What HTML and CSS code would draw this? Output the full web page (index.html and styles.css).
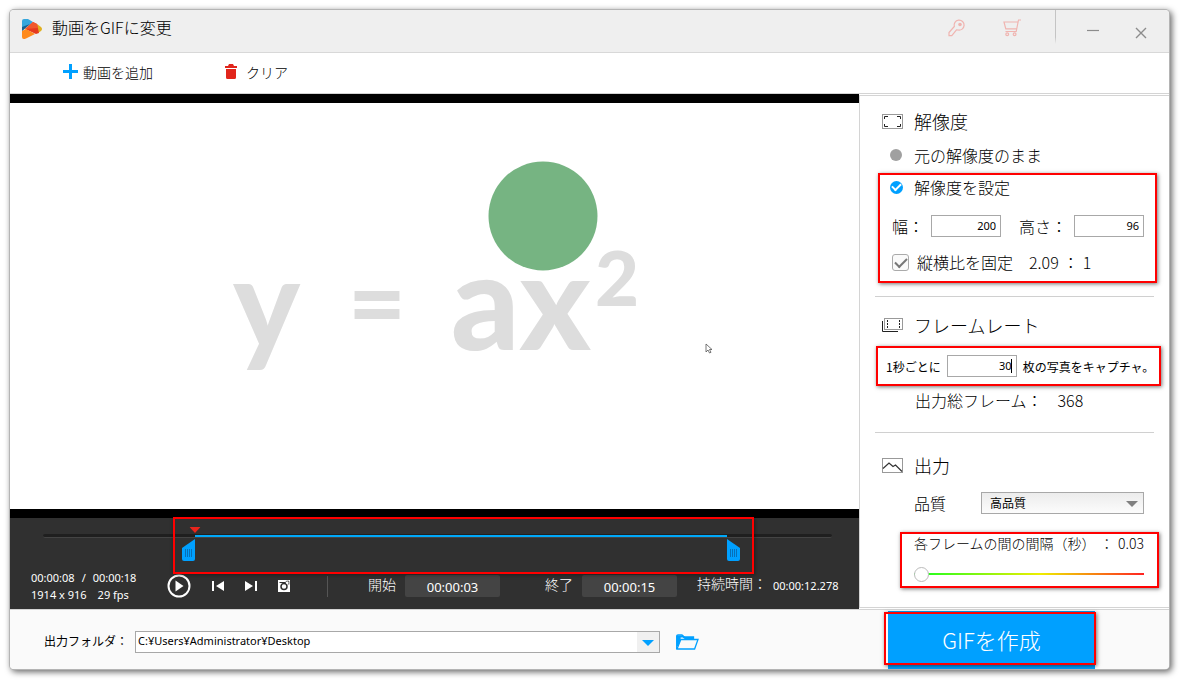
FILE: index.html
```html
<!DOCTYPE html>
<html lang="ja">
<head>
<meta charset="utf-8">
<title>動画をGIFに変更</title>
<link rel="stylesheet" href="styles.css">
</head>
<body>
<div class="window">
  <header class="titlebar">
    <svg class="logo" width="20" height="20" viewBox="0 0 20 20">
      <path d="M0 2Q0 0 2 0L6 0 11 3 0 12Z" fill="#35a6dc"/>
      <path d="M0 8L8 5 0 12Z" fill="#17608f"/>
      <path d="M15 5L19 8Q21 10 19 12L16 14Z" fill="#e0b020"/>
      <path d="M11 3L15 5 17 14 14 15 3 10Z" fill="#e63a1e"/>
      <path d="M11 3L15 5 16 9 3 10Z" fill="#f0582c"/>
      <path d="M0 12L4 10 13 15 4 19.500Q0 21 0 18Z" fill="#ff8a1c"/>
    </svg>
    <h1 class="title">動画をGIFに変更</h1>
    <button class="icon-button key" aria-label="登録">
      <svg width="18" height="18" viewBox="0 0 18 18" fill="none" stroke="#f0b4b0" stroke-width="1.2">
        <path d="M6.300 7.500A5 5 0 1 1 10 11L8.500 10.800 3.800 16.600H1V13.500Z"/>
        <circle cx="12" cy="5.500" r="1.200" fill="#f0b4b0"/>
      </svg>
    </button>
    <button class="icon-button cart" aria-label="購入">
      <svg width="18" height="18" viewBox="0 0 18 18" fill="none" stroke="#f0b4b0" stroke-width="1.2">
        <path d="M18 1H15.500L13.200 12.500H2.500M15 3H1L2.800 9.800H13.600"/>
        <circle cx="4.200" cy="15.200" r="1.400"/><circle cx="11.600" cy="15.200" r="1.400"/>
      </svg>
    </button>
    <span class="title-divider"></span>
    <button class="icon-button minimize" aria-label="最小化">
      <svg width="12" height="12" viewBox="0 0 12 12" stroke="#8c8c8c" stroke-width="1.2"><path d="M0 6.500H12"/></svg>
    </button>
    <button class="icon-button close" aria-label="閉じる">
      <svg width="12" height="12" viewBox="0 0 12 12" stroke="#8c8c8c" stroke-width="1.4"><path d="M1 1L11 11M11 1L1 11"/></svg>
    </button>
  </header>

  <nav class="toolbar">
    <button class="tool add">
      <svg width="15" height="15" viewBox="0 0 15 15" fill="#00a0ff"><path d="M6 0H9V6H15V9H9V15H6V9H0V6H6Z"/></svg>
      動画を追加
    </button>
    <button class="tool clear">
      <svg width="12" height="15" viewBox="0 0 12 15" fill="#e1251b"><path d="M0 2H3L4 0H8L9 2H12V4H0ZM1 5H11V13.500Q11 15 9.500 15H2.500Q1 15 1 13.500Z"/></svg>
      クリア
    </button>
  </nav>

  <main class="workspace">
    <section class="player">
      <div class="screen">
        <svg class="frame" viewBox="0 0 849 406" preserveAspectRatio="xMidYMid meet">
          <circle cx="533" cy="113" r="54.500" fill="#76b482"/>
          <g class="formula">
            <text x="223" y="246" font-size="126">y</text>
            <text x="338" y="235" font-size="100">=</text>
            <text x="441" y="247" font-size="134">ax</text>
            <text x="585" y="203" font-size="76">2</text>
          </g>
          <path d="M696 241V249L698 247 699.500 250 701 249.300 699.500 246.500H702Z" fill="#fff" stroke="#555" stroke-width=".8"/>
        </svg>
      </div>

      <div class="timeline">
        <div class="track">
          <span class="selection" style="left:19.300%;width:67.400%"></span>
          <svg class="playhead" style="left:19.300%" width="11" height="6" viewBox="0 0 11 6"><path d="M0 0H11L5.500 6Z" fill="#e8251c"/></svg>
          <svg class="handle start" style="left:19.300%" width="13" height="22" viewBox="0 0 13 22"><path d="M13 0V20Q13 22 11 22H2Q0 22 0 20V9Z" fill="#00a0ff"/><path d="M3.500 10V18M5.500 10V18M7.500 10V18M9.500 10V18" stroke="#0670b8"/></svg>
          <svg class="handle" style="left:86.700%" width="13" height="22" viewBox="0 0 13 22"><path d="M0 0V20Q0 22 2 22H11Q13 22 13 20V9Z" fill="#00a0ff"/><path d="M3.500 10V18M5.500 10V18M7.500 10V18M9.500 10V18" stroke="#0670b8"/></svg>
        </div>
        <span class="timeline-mark"></span>
      </div>

      <div class="controls">
        <div class="info">
          <div class="info-line"><span>00:00:08</span><span>/</span><span>00:00:18</span></div>
          <div class="info-line video"><span>1914 x 916</span><span>29 fps</span></div>
        </div>
        <div class="transport">
          <button class="icon-button" aria-label="再生">
            <svg width="24" height="24" viewBox="0 0 24 24"><circle cx="12" cy="12" r="10.500" fill="none" stroke="#fff" stroke-width="2"/><path d="M8.500 6.500L16.500 12 8.500 17.500Z" fill="#fff"/></svg>
          </button>
          <button class="icon-button" aria-label="前へ">
            <svg width="12" height="12" viewBox="0 0 12 12" fill="#fff"><path d="M0 1H2V11H0ZM12 1V11L4 6Z"/></svg>
          </button>
          <button class="icon-button" aria-label="次へ">
            <svg width="12" height="12" viewBox="0 0 12 12" fill="#fff"><path d="M10 1H12V11H10ZM0 1V11L8 6Z"/></svg>
          </button>
          <button class="icon-button" aria-label="スナップショット">
            <svg width="12" height="12" viewBox="0 0 12 12"><path d="M0 0H12V12H0Z" fill="#fff"/><path d="M1.500 2.500H7.500L8.500 1.200H10.800V4.500" fill="none" stroke="#303030" stroke-width="1"/><circle cx="6" cy="6.500" r="3" fill="#fff" stroke="#303030" stroke-width="1.500"/><circle cx="9.300" cy="2.800" r="1.200" fill="#fff"/></svg>
          </button>
        </div>
        <span class="control-divider"></span>
        <label class="time-field start-field">開始<input type="text" value="00:00:03"></label>
        <label class="time-field end-field">終了<input type="text" value="00:00:15"></label>
        <div class="duration">持続時間：<span>00:00:12.278</span></div>
      </div>
    </section>

    <aside class="settings">
      <section class="group">
        <h2 class="heading">
          <svg width="21" height="15" viewBox="0 0 21 15" fill="none"><rect x=".5" y=".5" width="20" height="14" stroke="#999"/><path d="M2.500 5V2.500H6M15 2.500H18.500V5M18.500 10V12.500H15M6 12.500H2.500V10" stroke="#222"/></svg>
          解像度
        </h2>
        <label class="option"><input class="radio" type="radio" name="size">元の解像度のまま</label>
        <div class="marked size-box">
          <label class="option"><input class="radio" type="radio" name="size" checked>解像度を設定</label>
          <div class="size-row">
            <label>幅：<input class="number" type="text" value="200"></label>
            <label class="height-label">高さ：<input class="number" type="text" value="96"></label>
          </div>
          <div class="ratio-row">
            <label><input class="check" type="checkbox" checked>縦横比を固定</label>
            <span class="ratio"><span>2.09</span><span>：</span><span>1</span></span>
          </div>
        </div>
      </section>

      <section class="group">
        <h2 class="heading">
          <svg width="21" height="15" viewBox="0 0 21 15" fill="none"><rect x="2.500" y=".5" width="18" height="11" stroke="#999"/><path d="M.5 3V13.500H16" stroke="#222"/><path d="M5.500 2V11M17.500 2V11" stroke="#222" stroke-dasharray="2 1"/></svg>
          フレームレート
        </h2>
        <label class="marked rate-box">1秒ごとに<input class="number" type="text" value="30"><span>枚の写真をキャプチャ。</span><i class="caret"></i></label>
        <div class="total">出力総フレーム：<span>368</span></div>
      </section>

      <section class="group">
        <h2 class="heading">
          <svg width="21" height="15" viewBox="0 0 21 15" fill="none"><rect x=".5" y=".5" width="20" height="14" stroke="#999"/><path d="M1 10.500L7 5 11 8.500 13.500 7 20 13.500" stroke="#333" stroke-width="1.200"/></svg>
          出力
        </h2>
        <label class="quality">品質
          <span class="select-wrap"><select><option>高品質</option></select></span>
        </label>
        <label class="marked interval-box">
          <span class="interval-text"><span>各フレームの間の間隔（秒）</span><span>：</span><span>0.03</span></span>
          <input class="slider" type="range" min="0" max="100" value="0">
        </label>
      </section>
    </aside>
  </main>

  <footer class="footer">
    <div class="folder">
      <label for="folder">出力フォルダ：</label>
      <span class="select-wrap path-wrap"><select id="folder"><option>C:¥Users¥Administrator¥Desktop</option></select></span>
      <button class="icon-button" aria-label="フォルダを開く">
        <svg width="23" height="16" viewBox="0 0 23 16" fill="none" stroke="#00a0ff" stroke-width="1.300"><path d="M.7 15V2Q.7 1 2 1H6L8 3H17.500V5"/><path d="M.7 2.500H7L9 4H17" stroke-width="2"/><path d="M1 15L4.800 5.500H22L18.600 15Z"/><path d="M1.500 3V12L4 5.500V3Z" fill="#00a0ff"/></svg>
      </button>
    </div>
    <button class="create">GIFを作成</button>
  </footer>
</div>
</body>
</html>
```
FILE: styles.css
```css
* { box-sizing: border-box; }

body {
  margin: 0;
  padding: 10px 11px 11px 10px;
  background: #fff;
  color: #000;
  font-family: "Noto Sans CJK JP", sans-serif;
  font-size: 16px;
  font-weight: 300;
}

button, input, select { font: inherit; color: inherit; }

button {
  padding: 0;
  border: 0;
  background: none;
}

svg { display: block; flex: none; }

.window {
  display: flex;
  flex-direction: column;
  min-height: calc(100vh - 21px);
  border-radius: 4px;
  background: #fff;
  box-shadow: 0 0 0 1px #b4b4b4, 2px 2px 6px 1px rgba(0, 0, 0, .6);
}

.titlebar {
  display: flex;
  align-items: flex-start;
  height: 43px;
  padding: 0 22px 0 12px;
  border-bottom: 1px solid #d8d8d8;
  border-radius: 4px 4px 0 0;
  background: #efefef;
}

.logo { margin-top: 9px; }

.title {
  flex: 1;
  margin: 5px 0 0 10px;
  font-size: 16px;
  font-weight: 300;
  line-height: 24px;
}

.key { margin-top: 9px; }
.cart { margin: 9px 0 0 37px; }

.title-divider {
  width: 1px;
  height: 34px;
  margin-left: 34px;
  background: linear-gradient(#c4c4c4 80%, #efefef);
}

.minimize { margin: 14px 0 0 31px; }
.close { margin: 17px 0 0 36px; }

.toolbar {
  display: flex;
  align-items: center;
  gap: 72px;
  height: 41px;
  padding: 0 53px 3px;
  border-bottom: 1px solid #d4d4d4;
}

.tool {
  display: flex;
  align-items: center;
  gap: 5px;
  font-size: 14px;
}

.clear { gap: 9px; }

.workspace {
  display: grid;
  grid-template-columns: minmax(0, 1fr) 310px;
  flex: 1;
}

.player {
  display: flex;
  flex-direction: column;
  background: #303030;
}

.screen {
  display: flex;
  flex: 1;
  min-height: 0;
  border: solid #000;
  border-width: 9px 0;
  background: #fff;
}

.frame { flex: 1; width: 100%; }

.formula {
  fill: #ddd;
  font-family: Lato, sans-serif;
  font-weight: 900;
}

.timeline {
  position: relative;
  height: 56px;
  padding: 16px 27px 0 33px;
}

.track {
  position: relative;
  height: 4px;
  border-bottom: 1px solid #444;
  border-radius: 2px;
  background: #1f1f1f;
}

.selection {
  position: absolute;
  top: 1px;
  height: 2px;
  background: #00a8f8;
}

.playhead {
  position: absolute;
  top: -7px;
  transform: translateX(-50%);
}

.handle {
  position: absolute;
  top: 5px;
}

.handle.start { transform: translateX(-100%); }

.timeline-mark {
  position: absolute;
  inset: -1px 12.4% 0 19.2%;
  border: 2px solid #f00;
  box-shadow: 1px 1px 4px rgba(0, 0, 0, .4);
}

.controls {
  display: flex;
  align-items: flex-start;
  height: 35px;
  padding-left: 21px;
  color: #fff;
  font-size: 14px;
  line-height: 22px;
  white-space: nowrap;
}

.info {
  width: 136px;
  margin-top: -5px;
  font-family: "Noto Sans", sans-serif;
  font-size: 11px;
  font-weight: 400;
  line-height: 17px;
}

.info-line { display: flex; gap: 7px; }
.info-line.video { gap: 11px; }

.transport {
  display: flex;
  align-items: center;
  gap: 21px;
}

.control-divider {
  width: 1px;
  height: 21px;
  margin: 2px 40px 0 37px;
  background: #555;
}

.time-field {
  display: flex;
  gap: 9px;
  line-height: 20px;
}

.time-field input {
  width: 95px;
  height: 22px;
  margin-top: 1px;
  padding: 2px 0 0;
  border: 0;
  border-radius: 2px;
  background: #444;
  font-family: "Noto Sans", sans-serif;
  font-size: 13px;
  font-weight: 400;
  text-align: center;
}

.end-field { margin-left: 45px; }

.duration {
  display: flex;
  gap: 6px;
  margin-left: 20px;
  line-height: 18px;
}

.duration span {
  font-family: "Noto Sans", sans-serif;
  font-size: 11px;
  font-weight: 400;
  line-height: 24px;
}

.settings {
  margin: 1px 0;
  padding: 11px 0 18px;
  border: solid #d4d4d4;
  border-width: 1px 0 1px 1px;
}

.group {
  margin: 0 15px;
  white-space: nowrap;
}

.group + .group { border-top: 1px solid #d0d0d0; padding-top: 14px; }
.group + .group + .group { padding-top: 18px; }

.heading {
  display: flex;
  align-items: center;
  gap: 11px;
  height: 28px;
  margin: 0;
  padding-left: 7px;
  font-size: 18px;
  font-weight: 300;
}

.marked {
  display: block;
  border: 2px solid #f00;
  box-shadow: 1px 1px 4px rgba(0, 0, 0, .55);
}

.option {
  display: flex;
  align-items: center;
  gap: 12px;
  height: 24px;
}

.heading + .option { margin: 8px 0 6px 15px; }

.radio {
  width: 12px;
  height: 12px;
  margin: 0;
  border-radius: 50%;
  appearance: none;
  background: #a0a0a0;
}

.radio:checked, .check {
  display: grid;
  place-items: center;
  background: #00a0ff;
}

.radio:checked { width: 13px; height: 13px; margin-right: -1px; }

.radio:checked::after, .check:checked::after {
  width: 7px;
  height: 4px;
  margin-top: -2px;
  border: solid #fff;
  border-width: 0 0 2px 2px;
  transform: rotate(-45deg);
  content: "";
}

.size-box {
  margin: 0 -3px 13px 3px;
  padding: 0 11px 7px 10px;
}

.size-row, .size-row label, .ratio-row, .ratio-row label, .ratio {
  display: flex;
  align-items: center;
}

.size-row {
  justify-content: space-between;
  height: 22px;
  margin: 16px 0 13px 2px;
}

.size-row label { gap: 7px; }

.number {
  width: 70px;
  height: 22px;
  padding: 0 4px 2px;
  border: 1px solid #a8a8a8;
  border-radius: 0;
  background: #fff;
  font-family: "Noto Sans", sans-serif;
  font-size: 11px;
  font-weight: 400;
  text-align: right;
}

.ratio-row { gap: 16px; height: 24px; padding-left: 2px; }
.ratio-row label { gap: 8px; }
.ratio { gap: 4px; }

.check {
  width: 17px;
  height: 17px;
  margin: 0;
  border: 1px solid #aaa;
  border-radius: 3px;
  appearance: none;
  background: #fafafa;
}

.check:checked::after { width: 10px; height: 5px; border-color: #777; }

.rate-box {
  position: relative;
  display: flex;
  align-items: center;
  gap: 6px;
  height: 40px;
  margin: 7px -7px 1px 1px;
  padding-left: 8px;
  font-size: 12px;
  font-weight: 400;
}

.caret {
  position: absolute;
  top: 11px;
  left: 133px;
  width: 1px;
  height: 14px;
  background: #000;
}

.total {
  display: flex;
  align-items: center;
  gap: 15px;
  height: 28px;
  margin: 0 0 17px 40px;
  padding-bottom: 3px;
}

.quality {
  display: flex;
  align-items: center;
  justify-content: space-between;
  height: 24px;
  margin: 12px 10px 0 39px;
}

.select-wrap {
  position: relative;
  display: flex;
  width: 163px;
}

.select-wrap select {
  width: 100%;
  height: 22px;
  padding: 0 24px 2px 8px;
  border: 1px solid #a8a8a8;
  border-radius: 0;
  appearance: none;
  background: linear-gradient(#ececec, #fcfcfc);
  font-size: 12px;
  font-weight: 400;
}

.select-wrap::after {
  position: absolute;
  top: 9px;
  right: 6px;
  border: solid transparent;
  border-width: 6px 6px 0;
  border-top-color: #808080;
  content: "";
}

.interval-box {
  margin: 17px -5px 0 25px;
  padding: 0 13px 2px 12px;
  font-size: 14px;
}

.interval-text {
  display: flex;
  justify-content: space-between;
  line-height: 18px;
}

.slider {
  display: block;
  width: 100%;
  height: 20px;
  margin: 12px 0 0;
  appearance: none;
  background: linear-gradient(90deg, #1f2, #ee0 55%, #f22) center / 100% 2px no-repeat;
}

.slider::-webkit-slider-thumb {
  width: 15px;
  height: 15px;
  border: 1px solid #bbb;
  border-radius: 50%;
  appearance: none;
  background: #fff;
}

.footer {
  display: flex;
  justify-content: space-between;
  height: 60px;
  padding: 1px 74px 0 34px;
  border-top: 1px solid #d4d4d4;
  border-radius: 0 0 4px 4px;
  background: #fafafa;
}

.folder {
  display: flex;
  align-items: center;
  flex: 1;
  padding-top: 4px;
  font-size: 12px;
}

.folder label { padding-bottom: 4px; font-weight: 400; }

.folder .icon-button { margin-left: 16px; }

.path-wrap { flex: 1; max-width: 525px; margin-left: 7px; }

.path-wrap select {
  padding: 0 24px 4px 2px;
  background: linear-gradient(90deg, #fff calc(100% - 22px), #f0f0f0 calc(100% - 22px));
  font-family: "Noto Sans", sans-serif;
  font-size: 11px;
  font-weight: 400;
}

.path-wrap::after { border-top-color: #00a0ff; }

.create {
  position: relative;
  width: 207px;
  padding-bottom: 3px;
  background: #00a0ff;
  color: #fff;
  font-size: 22px;
}

.create::after {
  position: absolute;
  inset: 1px -1px 4px -4px;
  border: 2px solid #f00;
  box-shadow: 1px 1px 4px rgba(0, 0, 0, .55);
  content: "";
}
```
